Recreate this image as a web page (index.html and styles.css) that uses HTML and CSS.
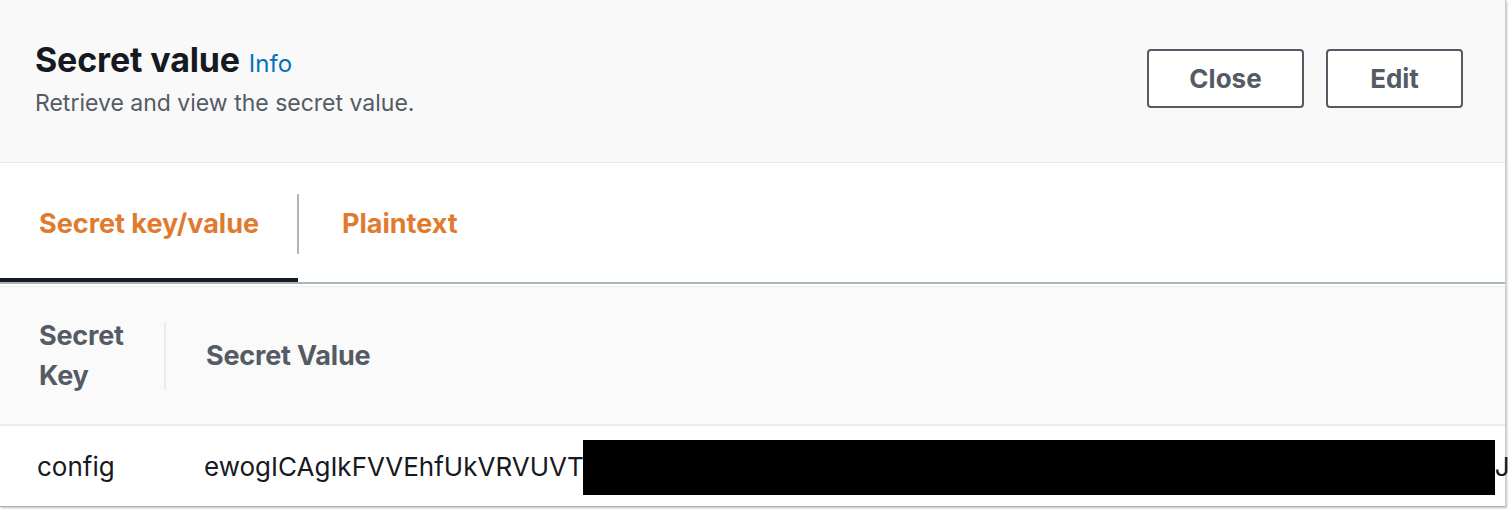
FILE: index.html
```html
<!DOCTYPE html>
<html>
<head>
<meta charset="utf-8">
<link rel="stylesheet" href="styles.css">
</head>
<body>
<div class="panel">
  <div class="header">
    <div class="heading">
      <h2 class="title">Secret value <a class="info">Info</a></h2>
      <p class="desc">Retrieve and view the secret value.</p>
    </div>
    <div class="actions">
      <button class="btn btn-close">Close</button>
      <button class="btn btn-edit">Edit</button>
    </div>
  </div>
  <div class="tabs">
    <div class="tab active"><span class="tab-label">Secret key/value</span></div>
    <div class="tab"><span class="tab-label">Plaintext</span></div>
  </div>
  <div class="table">
    <div class="thead">
      <div class="th th-key"><span>Secret<br>Key</span></div>
      <div class="th th-val"><span>Secret Value</span></div>
    </div>
    <div class="tr">
      <div class="td td-key">config</div>
      <div class="td td-val"><span class="val-text">ewogICAgIkFVVEhfUkVRVUVT</span><span class="redact"></span><span class="val-tail">J</span></div>
    </div>
  </div>
</div>
</body>
</html>
```
FILE: styles.css
```css
* { box-sizing: border-box; }
html, body { margin: 0; padding: 0; }
body { font-family: Inter, Lato, sans-serif; width: 1512px; height: 514px; overflow: hidden; background: #ffffff; }
.panel {
  width: 1506px;
  background: #ffffff;
  border-right: 1px solid #c9cccd;
  border-bottom: 1px solid #aab0b3;
  box-shadow: 1px 1px 2px rgba(0,0,0,0.25);
}
.header {
  height: 163px;
  background: #f9f9f9;
  border-bottom: 1px solid #e6e8e9;
  display: flex;
  justify-content: space-between;
  align-items: flex-start;
  padding: 0 42px 0 35px;
}
.heading { padding-top: 38px; }
.title {
  margin: 0;
  font-size: 34px;
  line-height: 44px;
  font-weight: 700;
  color: #16191f;
  letter-spacing: -0.15px;
}
.info {
  font-size: 24px;
  font-weight: 400;
  color: #0073bb;
  margin-left: 1px;
  letter-spacing: 0;
}
.desc {
  margin: 2px 0 0;
  font-size: 23px;
  line-height: 30px;
  color: #545b64;
}
.actions { display: flex; gap: 22px; padding-top: 49px; }
.btn {
  height: 59px;
  background: #ffffff;
  border: 2px solid #545b64;
  border-radius: 4px;
  color: #545b64;
  font-family: inherit;
  font-size: 26px;
  font-weight: 700;
  padding: 0;
}
.btn-close { width: 157px; }
.btn-edit { width: 137px; }
.tabs {
  display: flex;
  height: 121px;
  border-bottom: 2px solid #aab7b8;
}
.tab {
  display: flex;
  align-items: center;
  padding: 6px 39px 4px;
  position: relative;
  height: 119px;
  white-space: nowrap;
}
.tab.active {
  width: 298px;
  border-bottom: 4px solid #16191f;
  padding-bottom: 0;
  padding-right: 0;
}
.tab.active::after {
  content: "";
  position: absolute;
  right: -1px;
  top: 31px;
  height: 60px;
  width: 2px;
  background: #aab7b8;
}
.tab + .tab { padding-left: 44px; }
.tab-label {
  font-size: 27px;
  font-weight: 700;
  color: #e07a2e;
  letter-spacing: 0;
}
.table { border-top: 1px solid #eaeded; margin-top: 2px; }
.thead {
  display: flex;
  height: 139px;
  background: #fafafa;
  border-bottom: 2px solid #eaeded;
  align-items: center;
}
.th {
  font-size: 27px;
  font-weight: 700;
  color: #545b64;
  line-height: 40px;
  letter-spacing: -0.2px;
}
.th-key {
  flex: none;
  width: 166px;
  padding-left: 39px;
  border-right: 2px solid #eaeded;
  height: 68px;
  display: flex;
  align-items: center;
}
.th-val { padding-left: 40px; }
.tr {
  display: flex;
  height: 80px;
  align-items: center;
}
.td { font-size: 26px; color: #16191f; }
.td-key { flex: none; width: 167px; padding-left: 37px; }
.td-val {
  padding-left: 37px;
  flex: 1;
  white-space: nowrap;
  height: 80px;
  display: flex;
  align-items: center;
}
.redact {
  flex: none;
  width: 912px;
  height: 55px;
  margin-left: -1px;
  margin-top: 2px;
  background: #000000;
}
.val-tail { margin-left: 0; }
```
